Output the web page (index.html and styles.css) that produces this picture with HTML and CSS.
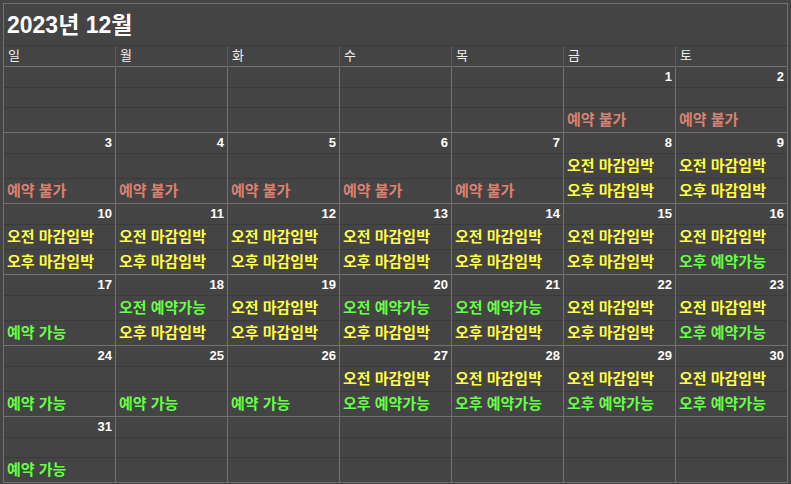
FILE: index.html
```html
<!DOCTYPE html>
<html lang="ko">
<head>
<meta charset="utf-8">
<title>2023년 12월</title>
<link rel="stylesheet" href="styles.css">
</head>
<body>
<div class="cal">
  <div class="title">2023년 12월</div>
  <div class="days">
    <div class="day">일</div><div class="day">월</div><div class="day">화</div><div class="day">수</div><div class="day">목</div><div class="day">금</div><div class="day">토</div>
  </div>

  <div class="week short">
    <div class="cell"><div class="num"></div><div class="s2"></div><div class="s3"></div></div>
    <div class="cell"><div class="num"></div><div class="s2"></div><div class="s3"></div></div>
    <div class="cell"><div class="num"></div><div class="s2"></div><div class="s3"></div></div>
    <div class="cell"><div class="num"></div><div class="s2"></div><div class="s3"></div></div>
    <div class="cell"><div class="num"></div><div class="s2"></div><div class="s3"></div></div>
    <div class="cell"><div class="num">1</div><div class="s2"></div><div class="s3 no">예약 불가</div></div>
    <div class="cell"><div class="num">2</div><div class="s2"></div><div class="s3 no">예약 불가</div></div>
  </div>

  <div class="week">
    <div class="cell"><div class="num">3</div><div class="s2"></div><div class="s3 no">예약 불가</div></div>
    <div class="cell"><div class="num">4</div><div class="s2"></div><div class="s3 no">예약 불가</div></div>
    <div class="cell"><div class="num">5</div><div class="s2"></div><div class="s3 no">예약 불가</div></div>
    <div class="cell"><div class="num">6</div><div class="s2"></div><div class="s3 no">예약 불가</div></div>
    <div class="cell"><div class="num">7</div><div class="s2"></div><div class="s3 no">예약 불가</div></div>
    <div class="cell"><div class="num">8</div><div class="s2 low">오전 마감임박</div><div class="s3 low">오후 마감임박</div></div>
    <div class="cell"><div class="num">9</div><div class="s2 low">오전 마감임박</div><div class="s3 low">오후 마감임박</div></div>
  </div>

  <div class="week">
    <div class="cell"><div class="num">10</div><div class="s2 low">오전 마감임박</div><div class="s3 low">오후 마감임박</div></div>
    <div class="cell"><div class="num">11</div><div class="s2 low">오전 마감임박</div><div class="s3 low">오후 마감임박</div></div>
    <div class="cell"><div class="num">12</div><div class="s2 low">오전 마감임박</div><div class="s3 low">오후 마감임박</div></div>
    <div class="cell"><div class="num">13</div><div class="s2 low">오전 마감임박</div><div class="s3 low">오후 마감임박</div></div>
    <div class="cell"><div class="num">14</div><div class="s2 low">오전 마감임박</div><div class="s3 low">오후 마감임박</div></div>
    <div class="cell"><div class="num">15</div><div class="s2 low">오전 마감임박</div><div class="s3 low">오후 마감임박</div></div>
    <div class="cell"><div class="num">16</div><div class="s2 low">오전 마감임박</div><div class="s3 ok">오후 예약가능</div></div>
  </div>

  <div class="week">
    <div class="cell"><div class="num">17</div><div class="s2"></div><div class="s3 ok">예약 가능</div></div>
    <div class="cell"><div class="num">18</div><div class="s2 ok">오전 예약가능</div><div class="s3 low">오후 마감임박</div></div>
    <div class="cell"><div class="num">19</div><div class="s2 low">오전 마감임박</div><div class="s3 low">오후 마감임박</div></div>
    <div class="cell"><div class="num">20</div><div class="s2 ok">오전 예약가능</div><div class="s3 low">오후 마감임박</div></div>
    <div class="cell"><div class="num">21</div><div class="s2 ok">오전 예약가능</div><div class="s3 low">오후 마감임박</div></div>
    <div class="cell"><div class="num">22</div><div class="s2 low">오전 마감임박</div><div class="s3 low">오후 마감임박</div></div>
    <div class="cell"><div class="num">23</div><div class="s2 low">오전 마감임박</div><div class="s3 ok">오후 예약가능</div></div>
  </div>

  <div class="week">
    <div class="cell"><div class="num">24</div><div class="s2"></div><div class="s3 ok">예약 가능</div></div>
    <div class="cell"><div class="num">25</div><div class="s2"></div><div class="s3 ok">예약 가능</div></div>
    <div class="cell"><div class="num">26</div><div class="s2"></div><div class="s3 ok">예약 가능</div></div>
    <div class="cell"><div class="num">27</div><div class="s2 low">오전 마감임박</div><div class="s3 ok">오후 예약가능</div></div>
    <div class="cell"><div class="num">28</div><div class="s2 low">오전 마감임박</div><div class="s3 ok">오후 예약가능</div></div>
    <div class="cell"><div class="num">29</div><div class="s2 low">오전 마감임박</div><div class="s3 ok">오후 예약가능</div></div>
    <div class="cell"><div class="num">30</div><div class="s2 low">오전 마감임박</div><div class="s3 ok">오후 예약가능</div></div>
  </div>

  <div class="week short">
    <div class="cell"><div class="num">31</div><div class="s2"></div><div class="s3 ok">예약 가능</div></div>
    <div class="cell"><div class="num"></div><div class="s2"></div><div class="s3"></div></div>
    <div class="cell"><div class="num"></div><div class="s2"></div><div class="s3"></div></div>
    <div class="cell"><div class="num"></div><div class="s2"></div><div class="s3"></div></div>
    <div class="cell"><div class="num"></div><div class="s2"></div><div class="s3"></div></div>
    <div class="cell"><div class="num"></div><div class="s2"></div><div class="s3"></div></div>
    <div class="cell"><div class="num"></div><div class="s2"></div><div class="s3"></div></div>
  </div>
</div>
</body>
</html>
```

FILE: styles.css
```css
html, body {
  margin: 0;
  padding: 0;
  background: #444444;
}
body {
  font-family: "Liberation Sans", "Noto Sans CJK KR", sans-serif;
  color: #ffffff;
  padding: 3px 0 0 3px;
}
.cal {
  width: 785px;
  box-sizing: border-box;
  border-left: 1px solid #717171;
  border-top: 1px solid #717171;
}
.title {
  height: 42px;
  box-sizing: border-box;
  border-right: 1px solid #717171;
  border-bottom: 1px solid #3a3a3a;
  padding: 0 0 3px 3px;
  display: flex;
  align-items: center;
  font-size: 23px;
  font-weight: bold;
}
.days {
  display: grid;
  grid-template-columns: repeat(7, 112px);
}
.day {
  height: 21px;
  box-sizing: border-box;
  border-right: 1px solid #5a5a5a;
  border-bottom: 1px solid #717171;
  padding-left: 4px;
  font-size: 13px;
  line-height: 20px;
  color: #eeeeee;
}
.day:last-child {
  border-right-color: #717171;
}
.week {
  display: grid;
  grid-template-columns: repeat(7, 112px);
}
.cell {
  border-right: 1px solid #717171;
  border-bottom: 1px solid #717171;
  display: flex;
  flex-direction: column;
}
.num {
  height: 21px;
  box-sizing: border-box;
  border-bottom: 1px solid #3a3a3a;
  text-align: right;
  padding-right: 3px;
  font-size: 13px;
  font-weight: bold;
  line-height: 20px;
}
.s2, .s3 {
  height: 25px;
  box-sizing: border-box;
  padding-left: 3px;
  font-size: 15px;
  font-weight: bold;
  line-height: 24px;
  white-space: nowrap;
}
.s2 {
  border-bottom: 1px solid #3a3a3a;
}
.s3 {
  height: 24px;
  line-height: 24px;
}
.short .s2 {
  height: 20px;
}
.no { color: #d98270; }
.low { color: #ffff44; }
.ok { color: #66ff44; }
```
